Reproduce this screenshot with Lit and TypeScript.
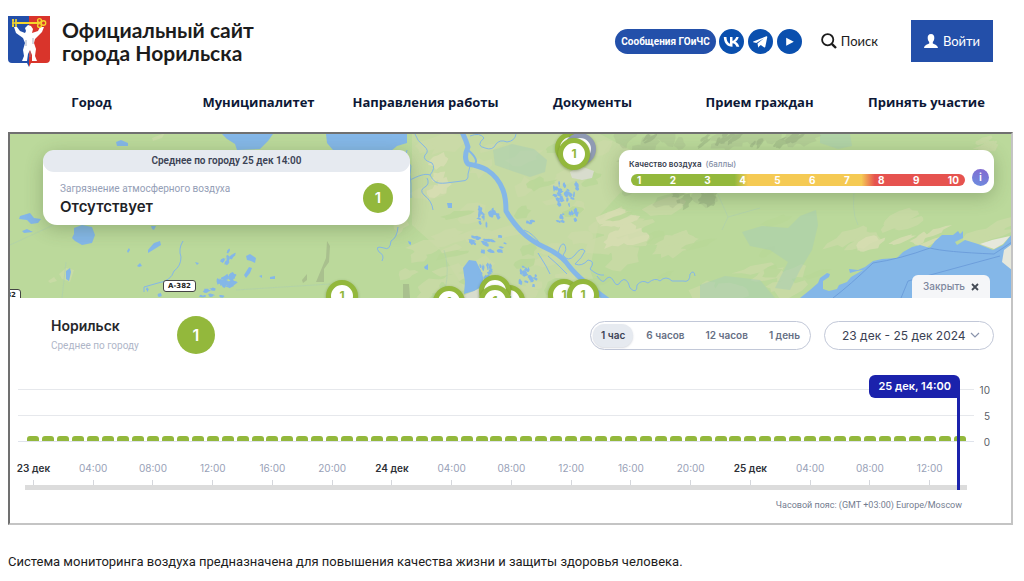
import { LitElement, html, svg, css } from "lit";
import { customElement, state } from "lit/decorators.js";
import { classMap } from "lit/directives/class-map.js";

/* ---------- map ---------- */

const MAP_X = 10;
const MAP_Y = 134;
const MAP_W = 1001;
const MAP_H = 164;

function randomizer(seed: number) {
  let s = seed;
  return () => {
    s = (s * 16807) % 2147483647;
    return s / 2147483647;
  };
}

function blob(rand: () => number, cx: number, cy: number, rx: number, ry: number, tilt: number) {
  const n = 11;
  const pts: string[] = [];
  for (let i = 0; i < n; i++) {
    const a = (i / n) * Math.PI * 2;
    const k = 0.55 + rand() * 0.6;
    const x = Math.cos(a) * rx * k;
    const y = Math.sin(a) * ry * k;
    pts.push(`${(cx + x).toFixed(1)},${(cy + y + x * tilt).toFixed(1)}`);
  }
  return pts.join(" ");
}

function scatter(seed: number, count: number, box: number[], rx: number[], ry: number[], tilt: number) {
  const rand = randomizer(seed * 7919);
  const [x0, y0, x1, y1] = box;
  return Array.from({ length: count }, () =>
    blob(
      rand,
      x0 + rand() * (x1 - x0),
      y0 + rand() * (y1 - y0),
      rx[0] + rand() * (rx[1] - rx[0]),
      ry[0] + rand() * (ry[1] - ry[0]),
      tilt
    )
  );
}

const MEADOWS = [
  ...scatter(71, 30, [415, 136, 600, 296], [8, 22], [4, 11], -0.2),
  ...scatter(15, 14, [600, 195, 680, 262], [12, 28], [6, 13], -0.25),
  ...scatter(28, 9, [385, 225, 470, 296], [8, 20], [4, 9], -0.2),
  ...scatter(94, 13, [845, 215, 1005, 250], [10, 24], [4, 9], -0.35),
  ...scatter(37, 10, [700, 265, 820, 296], [8, 22], [4, 9], -0.25),
  ...scatter(8, 3, [965, 138, 1002, 150], [8, 14], [3, 6], -0.3),
];
const SANDS = [
  ...scatter(51, 8, [605, 215, 650, 245], [10, 26], [5, 10], -0.2),
  ...scatter(62, 6, [855, 228, 950, 252], [8, 20], [3, 7], -0.4),
  ...scatter(43, 5, [418, 138, 445, 200], [6, 12], [5, 12], -0.2),
];
const WOODS = [
  ...scatter(83, 14, [425, 140, 600, 290], [8, 20], [3, 8], -0.2),
  ...scatter(19, 8, [620, 215, 820, 290], [8, 18], [3, 7], -0.3),
];
const WETLANDS = [
  "493,150 512,144 534,149 547,160 545,172 530,177 512,171 495,165",
  "742,232 762,226 788,228 800,216 816,210 818,225 812,250 800,270 790,290 775,288 788,262 770,250 750,246",
  "820,134 850,134 852,146 838,149 820,143",
  "700,285 725,276 760,280 775,298 700,298",
];
const PONDS = [
  ...scatter(12, 34, [554, 183, 578, 222], [1, 3], [1, 4], 0.2),
  ...scatter(33, 16, [478, 209, 499, 226], [1, 3], [1, 4], 0.2),
  ...scatter(54, 18, [471, 236, 506, 252], [1, 4], [1, 3], 0.2),
  ...scatter(75, 16, [519, 262, 536, 288], [1, 3], [1, 4], 0.2),
  ...scatter(96, 12, [479, 264, 491, 280], [1, 3], [1, 4], 0.2),
  ...scatter(27, 6, [526, 218, 535, 224], [1, 2], [1, 2], 0.2),
  ...scatter(48, 14, [217, 275, 234, 286], [2, 5], [2, 4], -0.2),
  ...scatter(49, 10, [222, 251, 236, 264], [1, 3], [1, 3], -0.6),
  ...scatter(60, 8, [142, 289, 224, 297], [1, 4], [1, 3], 0),
];
const HILLS = scatter(65, 22, [620, 134, 812, 146], [6, 16], [4, 10], -0.2).concat(
  scatter(66, 16, [622, 150, 715, 204], [6, 18], [4, 9], -0.2)
);
const RIDGES = scatter(77, 20, [622, 134, 800, 145], [3, 9], [2, 5], -0.6).concat(
  scatter(78, 10, [675, 192, 714, 207], [4, 10], [2, 5], -0.3)
);

const LAKES = [
  "116,142 121,140 128,143 128,146 117,146",
  "222,134 273,134 268,141 260,149 237,150 235,144 227,139",
  "326,134 407,134 407,143 397,146 391,151 333,150 327,143",
  "20,216 30,213 34,218 41,219 38,223 31,224 27,220 19,219",
  "22,231 27,229 33,232 24,233",
  "74,228 82,225 92,227 95,235 92,243 82,245 75,241 72,238 74,234",
  "151,226 156,226 154,230 152,229",
  "148,250 154,243 160,241 161,245 153,250 148,253",
  "127,251 129,248 130,250 128,253",
  "137,266 140,263 142,266 139,267",
  "66,271 70,268 71,272 69,281 66,279",
  "195,262 199,263 197,265",
  "246,256 250,254 256,258 255,263 251,261 247,260",
  "244,275 249,267 252,268 250,273 246,278",
  "259,276 262,275 262,278",
  "270,277 275,276 275,279 270,279",
  "463,268 469,260 476,261 480,269 483,277 483,286 474,291 464,294 465,282",
  "447,203 452,203 452,208 448,208",
  "424,267 428,264 428,270 425,269",
  "408,241 411,242 411,245 409,244",
];

const SEA =
  "800,298 810,290 818,283 820,278 827,273 830,274 829,277 823,281 823,289 829,291 837,289 839,285 847,282 851,277 863,270 857,271 850,273 849,269 858,270 865,267 873,261 882,259 897,258 903,252 912,247 920,245 930,248 935,241 942,235 953,235 958,231 960,234 963,231 963,238 955,242 957,245 965,240 978,244 993,250 1003,245 1012,234 1012,298";

const STREAMS = [
  "M410 180 C418 176 425 173 430 175 C434 182 436 184 446 183 L462 181 Q469 181 468 174 L470 166",
  "M430 175 Q436 168 432 163 Q422 160 425 155 Q430 151 424 146 Q417 141 415 134",
  "M407 150 Q404 158 411 166 Q409 174 411 184 L411 198",
  "M427 178 Q430 184 425 187 Q419 190 424 195 Q432 201 433 210",
  "M398 227 Q397 238 391 241 Q390 251 384 248 Q374 245 379 252 Q385 255 382 261",
  "M470 136 Q480 132 484 138 Q475 146 485 148 Q493 151 496 144 Q500 139 507 142 Q515 141 516 134",
  "M183 241 Q178 249 181 257 Q181 266 174 271 Q171 281 158 283 L144 287 V292",
  "M558 254 Q560 243 564 244 Q568 249 563 255 Q568 263 575 255 Q581 246 585 251 Q582 258 575 264 Q582 267 588 260 Q596 261 590 269 Q598 276 604 275",
  "M597 276 Q603 285 606 279 Q610 275 613 280 Q617 289 621 281 Q627 276 630 288 Q637 295 637 285 Q642 279 648 283 Q655 277 660 281 Q666 275 672 281 L683 281 Q690 283 690 274 Q694 269 695 276",
  "M538 253 L546 266 L550 274",
  "M548 256 L558 265 L567 274",
  "M524 230 Q533 233 541 245",
];

function mapArt() {
  const polys = (list: string[], cls: string) =>
    svg`<g class=${cls}>${list.map((p) => svg`<polygon points=${p}></polygon>`)}</g>`;
  return html`<svg
    class="map-art"
    viewBox="${MAP_X} ${MAP_Y} ${MAP_W} ${MAP_H}"
    preserveAspectRatio="xMidYMid slice"
    aria-hidden="true"
  >
    <rect class="land" x="0" y="0" width="1100" height="400"></rect>
    <polygon class="plain" points="412,134 600,134 650,160 600,215 590,270 600,298 470,298 440,250 412,225"></polygon>
    ${polys(MEADOWS, "meadow")} ${polys(SANDS, "sand")} ${polys(WOODS, "wood")}
    ${polys(WETLANDS, "wetland")} ${polys(HILLS, "hill")} ${polys(RIDGES, "ridge")}
    <polygon class="meadow" points="152,138 165,133 162,138 153,141"></polygon>
    <polygon class="meadow" points="48,281 54,277 57,281 50,283"></polygon>
    <polygon class="meadow" points="59,274 66,268 74,270 70,282 62,279"></polygon>
    <polygon class="fell" points="327,241 330,246 329,262 324,269 324,282 316,282 321,270 326,258"></polygon>
    <polygon class="fell" points="302,280 307,274 307,280 303,283"></polygon>
    <polygon class="fell" points="403,284 409,284 410,298 403,298"></polygon>
    <polygon class="town" points="570,172 580,166 594,171 592,178 582,180 572,178"></polygon>
    <polygon class="town" points="463,296 480,288 492,290 492,298 463,298"></polygon>
    <path class="trail" d="M10 245 L60 222 M62 298 L66 262 M236 290 L330 284 M716 190 L728 217 L760 208 M728 217 L722 230 M856 180 Q850 210 858 225 M445 290 Q450 268 444 250"></path>
    ${polys(LAKES, "water")} ${polys(PONDS, "water")}
    <polygon class="water" points=${SEA}></polygon>
    <polygon class="beach" points="980,244 992,240 1010,236 1003,244 994,249"></polygon>
    <polygon class="beach" points="1012,244 1004,250 1002,262 1012,270"></polygon>
    <path class="route" d="M833 298 Q850 285 873 263 Q900 259 930 248 Q945 252 994 254 L1012 242 M901 298 L908 281 L1000 256"></path>
    ${STREAMS.map((d) => svg`<path class="stream" d=${d}></path>`)}
    <path class="river-arm" d="M468 150 Q480 160 474 165"></path>
    <path class="river" d="M462 132 Q466 140 468 147 Q463 158 468 164 Q480 166 487 170 Q498 177 503 190 Q506 198 506 211 Q511 220 521 231 Q531 241 544 247 Q562 255 569 266 Q580 280 608 300"></path>
  </svg>`;
}

interface Pin {
  x: number;
  y: number;
  value: string;
  muted?: boolean;
}

const PINS: Pin[] = [
  { x: 571, y: 148, value: "1" },
  { x: 580, y: 149, value: "1", muted: true },
  { x: 574, y: 154, value: "1" },
  { x: 342, y: 296, value: "1" },
  { x: 449, y: 302, value: "1" },
  { x: 509, y: 301, value: "1" },
  { x: 495, y: 291, value: "1" },
  { x: 495, y: 301, value: "1" },
  { x: 564, y: 295, value: "1" },
  { x: 583, y: 295, value: "1" },
];

/* ---------- data ---------- */

const NAV = ["Город", "Муниципалитет", "Направления работы", "Документы", "Прием граждан", "Принять участие"];
const PERIODS = ["1 час", "6 часов", "12 часов", "1 день"];
const SCORES = [1, 2, 3, 4, 5, 6, 7, 8, 9, 10];
const HOURS = Array.from({ length: 63 }, () => 1);
const TICKS = [
  "23 дек", "04:00", "08:00", "12:00", "16:00", "20:00",
  "24 дек", "04:00", "08:00", "12:00", "16:00", "20:00",
  "25 дек", "04:00", "08:00", "12:00",
];

@customElement("site-header")
class SiteHeader extends LitElement {
  static styles = css`
    :host { display: block; font-family: Lato, "Noto Sans", sans-serif; }
    a { color: inherit; text-decoration: none; }
    .top { display: flex; align-items: center; height: 52px; padding: 15px 20px 0 0; }
    .brand { display: flex; align-items: center; gap: 12px; margin-right: auto; color: #1c1c1c; font-size: 21px; font-weight: 700; line-height: 23px; }
    .crest { width: 42px; height: 51px; }
    .social { display: flex; align-items: center; gap: 4px; }
    .alert { display: flex; align-items: center; height: 25px; padding: 0 6px; margin-right: -1px; border-radius: 13px; background: #2350aa; color: #fff; font: 700 10px/25px Roboto, sans-serif; }
    .round { display: block; width: 25px; height: 25px; }
    .search { display: flex; align-items: center; gap: 4px; margin: 0 33px 0 19px; padding: 0; border: 0; background: none; color: #1c1c1c; font: 400 13px/20px Lato, sans-serif; }
    .search svg { width: 16px; height: 16px; }
    .login { display: flex; align-items: center; justify-content: center; gap: 5px; width: 82px; height: 42px; background: #234fa9; color: #fff; font-size: 13px; }
    .login svg { width: 14px; height: 14px; }
    .nav { display: grid; grid-template-columns: repeat(6, minmax(0, 1fr)); padding: 26px 3px 20px 0; }
    .nav a { text-align: center; color: #0d1836; font: 700 13px/19px "Open Sans", sans-serif; }
  `;

  render() {
    return html`
      <header>
        <div class="top">
          <a class="brand" href="#">
            <svg class="crest" viewBox="0 0 42 51" aria-hidden="true">
              <path fill="#234fa9" d="M0 0H21V51L19 47H4Q0 47 0 43Z"></path>
              <path fill="#d9342b" d="M21 0H42V43Q42 47 38 47H23L21 51Z"></path>
              <path fill="#fff" d="M6 11L9 11L12 15L17 17L18 15L17 12L20 9L23 10L25 13L24 17L30 15L32 11L36 11L34 16L27 23L26 27L28 33L27 40L29 45H24L24 39L22 34L20 38L19 45H14L16 40L15 34L17 27L15 22L8 17Z"></path>
              <path fill="none" stroke="#8290ac" stroke-width="0.7" d="M18 24V30M25 22V28M22 35V41"></path>
              <path fill="none" stroke="#f5d62d" stroke-width="2" d="M9 7H31"></path>
              <path fill="none" stroke="#f5d62d" stroke-width="1.6" d="M5 3V11M8 3V11M4 7H10M4 4H6M4 10H6"></path>
              <g fill="none" stroke="#f5d62d" stroke-width="1.4">
                <circle cx="31.500" cy="4.500" r="1.900"></circle>
                <circle cx="31.500" cy="9.500" r="1.900"></circle>
                <circle cx="35.500" cy="7" r="2.200"></circle>
              </g>
            </svg>
            <span>Официальный сайт<br />города Норильска</span>
          </a>
          <div class="social">
            <a class="alert" href="#">Сообщения ГОиЧС</a>
            <a class="round" href="#" aria-label="ВКонтакте">
              <svg viewBox="0 0 25 25" width="25" height="25">
                <circle cx="12.500" cy="12.500" r="12.500" fill="#0a4fae"></circle>
                <path fill="#fff" d="M13.300 17.700C8 17.700 5 14.100 4.800 8.100H7.500C7.600 12.500 9.500 14.300 11 14.700V8.100H13.500V11.900C15 11.700 16.600 10 17.200 8.100H19.700C19.300 10.400 17.600 12.100 16.400 12.800C17.600 13.400 19.500 14.800 20.300 17.700H17.500C16.900 15.900 15.400 14.500 13.500 14.300V17.700Z"></path>
              </svg>
            </a>
            <a class="round" href="#" aria-label="Телеграм">
              <svg viewBox="0 0 25 25" width="25" height="25">
                <circle cx="12.500" cy="12.500" r="12.500" fill="#0a4fae"></circle>
                <path fill="#fff" d="M5.300 12.600L18.400 7.300Q19.500 7 19.200 8.400L17.300 17.700Q17 18.900 15.900 18.200L12.800 15.900L11 17.600L10.300 18.700L9.500 14.400L16 9.200L8.300 14L5.400 13.300Q4.800 13 5.300 12.600Z"></path>
              </svg>
            </a>
            <a class="round" href="#" aria-label="Видео">
              <svg viewBox="0 0 25 25" width="25" height="25">
                <circle cx="12.500" cy="12.500" r="12.500" fill="#0a4fae"></circle>
                <path fill="#fff" d="M9.200 8.700L16.800 12.700L9.200 16.700Z"></path>
              </svg>
            </a>
          </div>
          <button class="search" type="button">
            <svg viewBox="0 0 16 16" aria-hidden="true">
              <circle cx="6.700" cy="6.700" r="5.600" fill="none" stroke="#1c1c1c" stroke-width="1.800"></circle>
              <path d="M10.800 10.800L15 15" stroke="#1c1c1c" stroke-width="2.400"></path>
            </svg>
            Поиск
          </button>
          <a class="login" href="#">
            <svg viewBox="0 0 14 14" aria-hidden="true">
              <path fill="#fff" d="M7 0C9.400 0 10.500 1.700 10.300 4.200C10.200 6 9.600 7 8.800 7.900V9.500C10 10.300 13.600 10.800 14 14H0C.4 10.800 4 10.300 5.200 9.500V7.900C4.400 7 3.800 6 3.700 4.200C3.500 1.700 4.600 0 7 0Z"></path>
            </svg>
            Войти
          </a>
        </div>
        <nav class="nav">${NAV.map((n) => html`<a href="#">${n}</a>`)}</nav>
      </header>
    `;
  }
}

@customElement("air-map")
class AirMap extends LitElement {
  static styles = css`
    :host { display: block; }
    .map { position: relative; display: flex; justify-content: space-between; align-items: flex-start; box-sizing: border-box; height: 164px; padding: 16px 17px 0 33px; overflow: hidden; background: #bbd99b; }
    .map-art { position: absolute; inset: 0; width: 100%; height: 100%; }
    .land { fill: #bbd99b; }
    .plain { fill: #c5daa3; }
    .meadow { fill: #cddba9; opacity: 0.7; }
    .sand { fill: #dadeb5; opacity: 0.75; }
    .wood { fill: #b9d898; opacity: 0.8; }
    .wetland { fill: #a9ceb4; opacity: 0.5; }
    .hill { fill: #a3b88b; opacity: 0.3; }
    .fell { fill: #a9c08e; }
    .ridge { fill: #7f9570; opacity: 0.3; }
    .town { fill: #d8dccd; }
    .beach { fill: #e6e8dc; }
    .water { fill: #84b7e8; }
    .river, .river-arm, .stream, .trail, .route { fill: none; stroke: #84b7e8; stroke-linejoin: round; }
    .river { stroke-width: 5; }
    .river-arm { stroke-width: 2; }
    .stream { stroke-width: 1; }
    .trail { stroke: #adcfae; stroke-width: 0.6; }
    .route { stroke: #6798d8; stroke-width: 0.8; }
    .pin { position: absolute; display: flex; align-items: center; justify-content: center; box-sizing: border-box; width: 32px; height: 32px; margin: -16px 0 0 -16px; border: 5px solid #93b83c; border-radius: 50%; background: #fff; color: #93b83c; font: 700 12px/20px Inter, sans-serif; box-shadow: 0 1px 3px rgba(60, 80, 20, 0.4); }
    .pin.muted { border-color: #8f9ab3; color: #8f9ab3; }
    .road { position: absolute; padding: 0 4px; border: 1px solid #444; border-radius: 3px; background: #fff; color: #222; font: 700 7px/10px "DejaVu Sans", sans-serif; }
    .summary, .legend { position: relative; background: #fff; font-family: Inter, sans-serif; box-shadow: 0 4px 18px rgba(60, 80, 40, 0.3); }
    .summary { width: 367px; height: 75px; border-radius: 14px; }
    .summary-title { border-radius: 11px; background: #e6eaf0; color: #3b4254; text-align: center; font: 600 10px/22px Roboto, sans-serif; }
    .summary-body { display: flex; justify-content: space-between; align-items: center; padding: 8px 17px; }
    .summary-label { color: #949eb6; font: 400 10px/18px Roboto, sans-serif; }
    .summary-value { color: #212226; font-size: 15px; font-weight: 600; line-height: 18px; }
    .score { width: 30px; height: 30px; border-radius: 50%; background: #93b83c; color: #fff; text-align: center; font-size: 15px; font-weight: 600; line-height: 30px; }
    .legend { display: flex; align-items: flex-end; gap: 7px; box-sizing: border-box; width: 375px; height: 43px; padding: 8px 5px 6px 10px; border-radius: 11px; }
    .legend-main { flex: 1; }
    .legend-title { color: #343b4d; font-size: 8px; font-weight: 600; line-height: 12px; }
    .legend-unit { margin-left: 2px; color: #8690a8; font-weight: 500; }
    .scale { display: flex; justify-content: space-between; margin: 4px 0 1px 2px; padding: 0 6px; border-radius: 6px; background: linear-gradient(90deg, #93b83c 31%, #f5ca54 35%, #f5ca54 69%, #e6534f 73%); color: #fff; font-size: 10px; font-weight: 700; line-height: 12px; }
    .info { width: 17px; height: 17px; margin-bottom: 1px; padding: 0; border: 0; border-radius: 50%; background: linear-gradient(200deg, #8566cf, #6b8fe0); color: #fff; font: 600 11px/17px Inter, sans-serif; }
    .close { position: absolute; right: 21px; bottom: 0; display: flex; align-items: center; gap: 6px; height: 23px; padding: 0 11px; border: 0; border-radius: 6px 6px 0 0; background: #f5f6f8; color: #7d879d; font: 500 10px/23px Inter, sans-serif; }
    .close svg { width: 8px; height: 8px; }
  `;

  render() {
    return html`
      <section class="map">
        ${mapArt()}
        ${PINS.map(
          (p) => html`<span
            class=${classMap({ pin: true, muted: !!p.muted })}
            style="left:${((p.x - MAP_X) / MAP_W) * 100}%;top:${((p.y - MAP_Y) / MAP_H) * 100}%"
            >${p.value}</span
          >`
        )}
        <span class="road" style="left:${((163 - MAP_X) / MAP_W) * 100}%;top:${((280 - MAP_Y) / MAP_H) * 100}%">A-382</span>
        <span class="road" style="left:${((-12 - MAP_X) / MAP_W) * 100}%;top:${((289 - MAP_Y) / MAP_H) * 100}%">A-382</span>
        <div class="summary">
          <div class="summary-title">Среднее по городу 25 дек 14:00</div>
          <div class="summary-body">
            <div>
              <div class="summary-label">Загрязнение атмосферного воздуха</div>
              <div class="summary-value">Отсутствует</div>
            </div>
            <div class="score">1</div>
          </div>
        </div>
        <div class="legend">
          <div class="legend-main">
            <div class="legend-title">Качество воздуха <span class="legend-unit">(баллы)</span></div>
            <div class="scale">${SCORES.map((s) => html`<span>${s}</span>`)}</div>
          </div>
          <button class="info" type="button" aria-label="О шкале">i</button>
        </div>
        <button class="close" type="button">
          Закрыть
          <svg viewBox="0 0 8 8" aria-hidden="true">
            <path d="M1 1L7 7M7 1L1 7" stroke="#444a55" stroke-width="1.800"></path>
          </svg>
        </button>
      </section>
    `;
  }
}

@customElement("air-chart")
class AirChart extends LitElement {
  @state() private period = 0;

  static styles = css`
    :host { display: block; font-family: Inter, sans-serif; }
    .panel { padding: 16px 17px 11px 8px; }
    .head { display: flex; align-items: center; }
    .place { width: 126px; margin-left: 33px; padding-top: 2px; }
    .place-name { color: #26272b; font-size: 14px; font-weight: 600; line-height: 20px; }
    .place-note { color: #afb6c8; font: 400 10px/20px Roboto, sans-serif; }
    .score { width: 38px; height: 38px; margin-right: auto; border-radius: 50%; background: #93b83c; color: #fff; text-align: center; font-size: 16px; font-weight: 600; line-height: 38px; }
    .periods { display: flex; gap: 5px; margin-right: 13px; padding: 2px; border: 1px solid #c2c8d8; border-radius: 15px; }
    .periods button { padding: 0 8px; border: 0; border-radius: 12px; background: none; color: #666f84; font: 600 10px/23px Inter, sans-serif; }
    .periods .active { background: #e6eaf0; color: #3b4254; box-shadow: 0 1px 2px rgba(60, 70, 100, 0.2); }
    .range { position: relative; }
    .range select { display: block; width: 170px; height: 29px; padding: 0 17px; border: 1px solid #c2c8d8; border-radius: 15px; appearance: none; background: #fff; color: #3b4254; font: 400 12px/27px Inter, sans-serif; }
    .range svg { position: absolute; right: 14px; top: 11px; width: 10px; height: 7px; pointer-events: none; }
    .chart { display: grid; grid-template-columns: minmax(0, 1fr) 16px; padding: 33px 4px 0 0; }
    .plot { position: relative; }
    .bars { display: grid; grid-template-columns: repeat(63, minmax(0, 1fr)); align-items: end; justify-items: center; height: 52px; padding: 0 7px 0 8px; border-bottom: 1px solid #dfe3ec; background: linear-gradient(#e6e8ec 1px, transparent 1px) 0 0 / 100% 26px; }
    .bar { width: 12px; border-radius: 3px 3px 0 0; background: #93b83c; }
    .axis { display: flex; flex-direction: column; justify-content: space-between; height: 70px; margin-top: -8px; color: #5a5e68; text-align: right; font-size: 10px; line-height: 18px; }
    .times { display: grid; grid-template-columns: repeat(63, minmax(0, 1fr)); padding: 17px 7px 0 8px; }
    .time { display: flex; flex-direction: column; align-items: center; gap: 3px; color: #98a1b7; font-size: 10px; line-height: 18px; white-space: nowrap; }
    .time.day { color: #2d2f36; font-weight: 600; }
    .time::after { content: ""; width: 1px; height: 5px; background: #d5d7dc; }
    .track { height: 5px; margin: 0 7px; background: #dcdcdc; }
    .marker { position: absolute; right: 14px; top: -14px; bottom: 0; display: flex; flex-direction: column; align-items: flex-end; color: #fff; }
    .marker::after { content: ""; flex: 1; width: 3px; background: #1b22ac; }
    .flag { padding: 0 9px; border-radius: 6px 6px 0 6px; background: #1b22ac; font-size: 11px; font-weight: 600; line-height: 23px; }
    .zone { padding: 8px 32px 0 0; color: #747d90; text-align: right; font: 400 9px/14px Roboto, sans-serif; }
  `;

  render() {
    return html`
      <section class="panel">
        <div class="head">
          <div class="place">
            <div class="place-name">Норильск</div>
            <div class="place-note">Среднее по городу</div>
          </div>
          <div class="score">1</div>
          <div class="periods">
            ${PERIODS.map(
              (p, i) => html`<button
                type="button"
                class=${classMap({ active: i === this.period })}
                @click=${() => (this.period = i)}
              >
                ${p}
              </button>`
            )}
          </div>
          <div class="range">
            <select aria-label="Период">
              <option>23 дек - 25 дек 2024</option>
            </select>
            <svg viewBox="0 0 10 7" aria-hidden="true">
              <path d="M1 1L5 5L9 1" fill="none" stroke="#8a94ac" stroke-width="1.200"></path>
            </svg>
          </div>
        </div>
        <div class="chart">
          <div class="plot">
            <div class="bars">
              ${HOURS.map((v) => html`<span class="bar" style="height:${v * 5}px"></span>`)}
            </div>
            <div class="times">
              ${TICKS.map(
                (t, i) => html`<span
                  class=${classMap({ time: true, day: i % 6 === 0 })}
                  style="grid-column:${i * 4 + 1}"
                  >${t}</span
                >`
              )}
            </div>
            <div class="track"></div>
            <div class="marker"><div class="flag">25 дек, 14:00</div></div>
          </div>
          <div class="axis"><span>10</span><span>5</span><span>0</span></div>
        </div>
        <div class="zone">Часовой пояс: (GMT +03:00) Europe/Moscow</div>
      </section>
    `;
  }
}

@customElement("app-root")
class AppRoot extends LitElement {
  static styles = css`
    :host { display: block; background: #fff; }
    .page { padding: 0 11px 8px 8px; }
    .frame { border: 2px solid; border-color: #707070 #c4c4c4 #c4c4c4 #707070; }
    .about { margin: 27px 0 0; color: #1c1c1c; font: 400 13px/20px Roboto, sans-serif; }
  `;

  render() {
    return html`
      <div class="page">
        <site-header></site-header>
        <main>
          <div class="frame">
            <air-map></air-map>
            <air-chart></air-chart>
          </div>
          <p class="about">
            Система мониторинга воздуха предназначена для повышения качества жизни и защиты здоровья человека.
          </p>
        </main>
      </div>
    `;
  }
}
